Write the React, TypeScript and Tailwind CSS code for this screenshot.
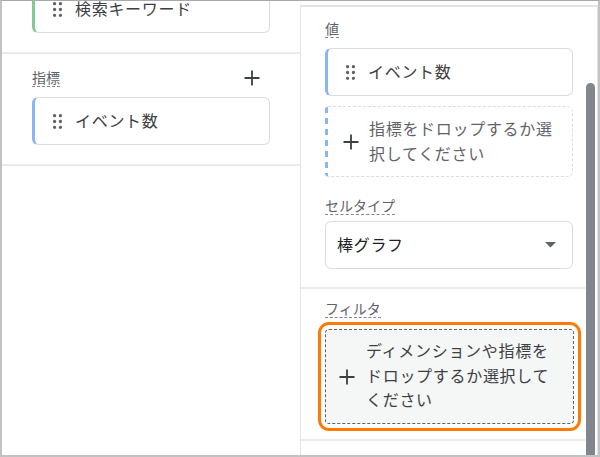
import React from "react";

const Grip = () => (
  <svg width="9" height="15" viewBox="0 0 9 15" className="shrink-0">
    {[1.7, 7.5, 13.3].map((y) =>
      [1.6, 7.4].map((x) => <circle key={`${x}-${y}`} cx={x} cy={y} r="1.65" fill="#5f6368" />)
    )}
  </svg>
);

const Plus = () => (
  <svg width="16" height="16" viewBox="0 0 16 16" className="shrink-0">
    <path d="M8 0.5V15.5M0.5 8H15.5" stroke="#3c4043" strokeWidth="1.8" fill="none" />
  </svg>
);

const Label = ({ children }: { children: React.ReactNode }) => (
  <span className="block w-fit text-[14px] leading-[18px] text-[#5f6368] border-b border-dashed border-[#80868b]">
    {children}
  </span>
);

const Chip = ({ text, accent }: { text: string; accent: string }) => (
  <div className={`h-[48px] flex items-center rounded-[6px] border border-[#dadce0] border-l-[3px] pl-[18px] ${accent}`}>
    <Grip />
    <span className="ml-[13px] mb-[3px] text-[16px] tracking-[0.7px] text-[#3c4043] leading-none">{text}</span>
  </div>
);

export default function App() {
  return (
    <div className="w-[600px] h-[457px] flex bg-white border-x-2 border-b-2 border-t border-[#c2c2c2] border-t-[#a9a9a9] overflow-hidden font-['Noto_Sans_CJK_JP','Noto_Sans',sans-serif]">
      {/* left panel */}
      <div className="w-[298px] shrink-0 flex flex-col">
        <div className="mt-[-16px] px-[30px]">
          <Chip text="検索キーワード" accent="border-l-[#81c995]" />
        </div>
        <div className="mt-[19px] h-[2px] bg-[#ebebeb]" />
        <div className="pt-[14px] px-[30px]">
          <div className="flex items-center justify-between">
            <Label>指標</Label>
            <div className="mr-[10px]">
              <Plus />
            </div>
          </div>
          <div className="mt-[10px]">
            <Chip text="イベント数" accent="border-l-[#8ab4f8]" />
          </div>
        </div>
        <div className="mt-[19px] h-[2px] bg-[#ebebeb]" />
      </div>

      {/* right panel */}
      <div className="w-[298px] shrink-0 mt-[4px] flex border-l border-r border-t-2 border-[#e3e3e3]">
        <div className="w-[284px] shrink-0 flex flex-col">
          <div className="pl-[24px] pr-[12px] pt-[12px]">
            <Label>値</Label>
            <div className="mt-[10px]">
              <Chip text="イベント数" accent="border-l-[#8ab4f8]" />
            </div>
            <div className="mt-[10px] h-[71px] flex rounded-r-[6px] rounded-l-[3px] border border-l-0 border-dashed border-[#dadce0] overflow-hidden">
              <div className="w-[3px] shrink-0 bg-[repeating-linear-gradient(to_bottom,#8ab4f8_0px,#8ab4f8_6px,transparent_6px,transparent_11px)]" />
              <div className="flex items-center pl-[15px] pr-[14px]">
                <Plus />
                <span className="ml-[10px] mb-[2px] text-[16px] leading-[25px] tracking-[0.7px] text-[#5f6368]">
                  指標をドロップするか選択してください
                </span>
              </div>
            </div>
            <div className="mt-[19px]">
              <Label>セルタイプ</Label>
            </div>
            <div className="mt-[6px] h-[48px] flex items-center justify-between rounded-[6px] border border-[#dadce0] pl-[11px] pr-[16px]">
              <span className="mb-[2px] text-[16px] tracking-[0.7px] text-[#202124] leading-none">棒グラフ</span>
              <svg width="11" height="6" viewBox="0 0 11 6">
                <path d="M0 0H11L5.5 5.5Z" fill="#5f6368" />
              </svg>
            </div>
          </div>
          <div className="mt-[18px] h-[2px] bg-[#ebebeb]" />
          <div className="pl-[24px] pr-[11px] pt-[10px]">
            <Label>フィルタ</Label>
            <div className="mt-[11px] h-[95px] flex items-center rounded-[4px] border border-dashed border-[#5f6368] bg-[#f5f6f6] pl-[13px] pr-[18px] outline-[3px] outline-solid outline-[#ff7a00] outline-offset-[4px]">
              <Plus />
              <span className="ml-[11px] mb-[3px] text-[16px] leading-[24.5px] tracking-[0.7px] text-[#3c4043]">
                ディメンションや指標をドロップするか選択してください
              </span>
            </div>
          </div>
          <div className="mt-[15px] h-[2px] bg-[#ebebeb]" />
        </div>
        <div className="w-[12px] shrink-0 flex flex-col">
          <div className="mt-[76px] ml-[1px] w-[9px] flex-1 rounded-t-full bg-[#80868b]" />
        </div>
      </div>
    </div>
  );
}
